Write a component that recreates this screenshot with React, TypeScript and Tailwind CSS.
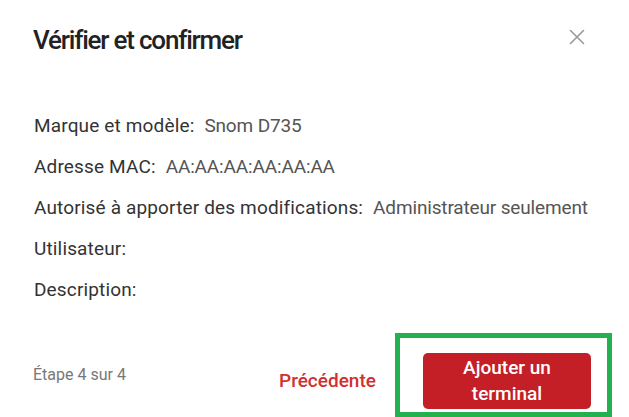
import React from "react";

const rows: [string, string][] = [
  ["Marque et modèle:", "Snom D735"],
  ["Adresse MAC:", "AA:AA:AA:AA:AA:AA"],
  ["Autorisé à apporter des modifications:", "Administrateur seulement"],
  ["Utilisateur:", ""],
  ["Description:", ""],
];

export default function App() {
  return (
    <div
      className="w-[629px] h-[417px] bg-white overflow-hidden flex flex-col"
      style={{ fontFamily: "Roboto, 'Liberation Sans', sans-serif" }}
    >
      <div className="flex items-start justify-between pl-[33px] pr-[44px] pt-[25px]">
        <h1 className="text-[26px] leading-[31px] font-medium text-[#222] tracking-[-1.2px]">
          Vérifier et confirmer
        </h1>
        <button className="mt-[4px] w-[16px] h-[16px] flex items-center justify-center">
          <svg width="16" height="16" viewBox="0 0 16 16">
            <path d="M1.5 1.5 L14.5 14.5 M14.5 1.5 L1.5 14.5" stroke="#9a9a9a" strokeWidth="1.6" strokeLinecap="round" />
          </svg>
        </button>
      </div>
      <div className="flex flex-col gap-[17px] pl-[34px] pt-[58px]">
        {rows.map(([k, v]) => (
          <div key={k} className="flex text-[19px] leading-[24px]">
            <span className="text-[#333] tracking-[0.15px]">{k}</span>
            {v && <span className="ml-[10px] text-[#555] tracking-[-0.15px]">{v}</span>}
          </div>
        ))}
      </div>
      <div className="flex items-center mt-auto pl-[33px]">
        <div className="w-[246px] shrink-0">
          <span className="text-[16px] text-[#777]">Étape 4 sur 4</span>
        </div>
        <span className="w-[96px] shrink-0 whitespace-nowrap text-[19px] font-medium text-[#d32f2f] mt-[12px]">Précédente</span>
        <div className="ml-[20px] border-[5px] border-[#22b14c] pl-[23px] pr-[16px] pt-[15px] pb-[3px]">
          <button className="w-[168px] h-[56px] rounded-[5px] bg-[#c41f26] text-white text-[19px] leading-[26px] font-medium">
            Ajouter un
            <br />
            terminal
          </button>
        </div>
      </div>
    </div>
  );
}
